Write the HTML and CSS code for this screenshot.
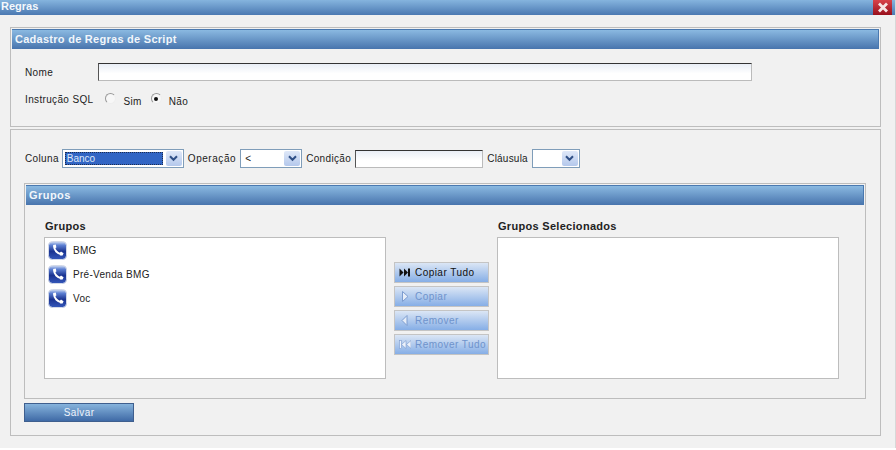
FILE: index.html
```html
<!DOCTYPE html>
<html lang="en">
<head>
  <meta charset="UTF-8">
  <title>Regras</title>
  <link rel="stylesheet" href="styles.css">
</head>
<body>
  <svg class="defs" width="0" height="0">
    <defs>
      <linearGradient id="phone-bg" x1="0" y1="0" x2="0" y2="1">
        <stop offset="0" stop-color="#d5e0f4"/>
        <stop offset="0.2" stop-color="#5f82d4"/>
        <stop offset="0.55" stop-color="#1a3391"/>
        <stop offset="1" stop-color="#3558bb"/>
      </linearGradient>
      <symbol id="phone" viewBox="0 0 19 19">
        <rect x="0.5" y="0.5" width="18" height="18" rx="4" fill="url(#phone-bg)" stroke="#d3d9e8"/>
        <path d="M6.2 5 C6 9 9.4 13 13.8 13.2" fill="none" stroke="#fff" stroke-width="2"/>
        <path d="M5 4 L7.8 3.6 L8.4 6.6 L6 7.4 Z M11.4 12.2 L13 10.6 L15.6 12.2 L14.6 14.6 L12 14.6 Z" fill="#fff"/>
      </symbol>
    </defs>
  </svg>

  <div class="window">
    <div class="titlebar">
      <span class="title">Regras</span>
      <span class="close">
        <svg width="12" height="11" viewBox="0 0 12 11"><path d="M2 1.5 L10 9.5 M10 1.5 L2 9.5" stroke="#f6e6e6" stroke-width="2.8"/></svg>
      </span>
    </div>

    <!-- Cadastro -->
    <section class="panel panel-top">
      <h3 class="header header-cadastro">Cadastro de Regras de Script</h3>
      <div class="row row-nome">
        <label class="lbl lbl-nome">Nome</label>
        <input type="text" class="field field-nome">
      </div>
      <div class="row row-sql">
        <label class="lbl">Instrução SQL</label>
        <span class="radio"></span><span class="lbl radio-lbl">Sim</span>
        <span class="radio checked"></span><span class="lbl radio-lbl">Não</span>
      </div>
    </section>

    <section class="panel panel-main">
      <!-- Filtro -->
      <div class="filter">
        <label class="lbl lbl-coluna">Coluna</label>
        <div class="combo combo-coluna">
          <span class="combo-value selected">Banco</span>
          <span class="combo-btn"><svg width="9" height="7" viewBox="0 0 9 7"><path d="M1 1.2 L4.5 4.8 L8 1.2" fill="none" stroke="#2f4f86" stroke-width="2"/></svg></span>
        </div>
        <label class="lbl lbl-op">Operação</label>
        <div class="combo combo-op">
          <span class="combo-value">&lt;</span>
          <span class="combo-btn"><svg width="9" height="7" viewBox="0 0 9 7"><path d="M1 1.2 L4.5 4.8 L8 1.2" fill="none" stroke="#2f4f86" stroke-width="2"/></svg></span>
        </div>
        <label class="lbl">Condição</label>
        <input type="text" class="field field-cond">
        <label class="lbl lbl-clausula">Cláusula</label>
        <div class="combo combo-clausula">
          <span class="combo-value"></span>
          <span class="combo-btn"><svg width="9" height="7" viewBox="0 0 9 7"><path d="M1 1.2 L4.5 4.8 L8 1.2" fill="none" stroke="#2f4f86" stroke-width="2"/></svg></span>
        </div>
      </div>

      <!-- Grupos -->
      <div class="panel panel-grupos">
        <h3 class="header">Grupos</h3>
        <div class="picker">
          <div class="col">
            <div class="col-title">Grupos</div>
            <ul class="list">
              <li><svg class="phone" width="19" height="19"><use href="#phone"/></svg>BMG</li>
              <li><svg class="phone" width="19" height="19"><use href="#phone"/></svg>Pré-Venda BMG</li>
              <li><svg class="phone" width="19" height="19"><use href="#phone"/></svg>Voc</li>
            </ul>
          </div>
          <div class="moves">
            <button class="move">
              <svg width="12" height="9" viewBox="0 0 12 9"><path d="M0.5 0.5 L4.5 4.5 L0.5 8.5 Z M5 0.5 L9 4.5 L5 8.5 Z" fill="#111"/><rect x="9" y="0.5" width="2" height="8" fill="#111"/></svg>
              Copiar Tudo
            </button>
            <button class="move" disabled>
              <svg width="12" height="11" viewBox="0 0 12 11"><path d="M3.5 0.5 L9 5.5 L3.5 10.5 Z" fill="#e6edf8" stroke="#7c9ccf"/></svg>
              Copiar
            </button>
            <button class="move" disabled>
              <svg width="12" height="11" viewBox="0 0 12 11"><path d="M8 0.5 L3 5.5 L8 10.5 Z" fill="#e6edf8" stroke="#7c9ccf"/></svg>
              Remover
            </button>
            <button class="move" disabled>
              <svg width="12" height="9" viewBox="0 0 12 9"><rect x="0.5" y="0.5" width="2" height="8" fill="#eef3fb" stroke="#7c9ccf" stroke-width="0.6"/><path d="M7 0.5 L2.5 4.5 L7 8.5 Z M12 0.5 L7.5 4.5 L12 8.5 Z" fill="#eef3fb" stroke="#7c9ccf" stroke-width="0.6"/></svg>
              Remover Tudo
            </button>
          </div>
          <div class="col">
            <div class="col-title">Grupos Selecionados</div>
            <ul class="list"></ul>
          </div>
        </div>
      </div>

      <button class="save">Salvar</button>
    </section>
  </div>
</body>
</html>
```

FILE: styles.css
```css
body {
  margin: 0;
  padding: 0;
  background-color: #fff;
  font-family: "Liberation Sans", Arial, sans-serif;
  font-size: 10px;
  color: #222;
  overflow: hidden;
}

.defs {
  position: absolute;
}

.window {
  width: 895px;
  height: 448px;
  background-color: #f1f1f1;
  border-right: 1px solid #d8d8d8;
  overflow: hidden;
}

/* Title bar */
.titlebar {
  height: 15px;
  padding-left: 1px;
  display: flex;
  justify-content: space-between;
  background: linear-gradient(#85b4de, #4b79b2);
  color: #f4f8fc;
  font-size: 11px;
  font-weight: bold;
  line-height: 13px;
}

.close {
  width: 19px;
  height: 15px;
  margin-right: 3px;
  display: flex;
  align-items: center;
  justify-content: center;
  background: linear-gradient(#d8424a, #98101c);
}

/* Panels */
.panel {
  border: 1px solid #bdbdbd;
  padding: 1px;
}

.panel-top {
  width: 867px;
  height: 96px;
  margin: 12px 0 0 10px;
}

.panel-main {
  width: 867px;
  height: 303px;
  margin: 2px 0 0 10px;
}

.panel-grupos {
  width: 838px;
  height: 212px;
  margin: 15px 0 0 12px;
}

.header {
  margin: 0;
  height: 20px;
  padding-left: 3px;
  border: 1px solid #4a79b0;
  border-width: 1px 1px 0 0;
  box-sizing: border-box;
  background: linear-gradient(#8ab9e1, #4874ad);
  color: #f1f6fb;
  font-size: 11px;
  font-weight: bold;
  letter-spacing: 0.45px;
  line-height: 19px;
}

.header-cadastro {
  letter-spacing: 0.27px;
}

.lbl {
  letter-spacing: 0.35px;
}

/* Form rows */
.row {
  display: flex;
  align-items: center;
  padding-left: 13px;
}

.row-nome {
  margin-top: 14px;
}

.lbl-nome {
  width: 73px;
}

.field {
  box-sizing: border-box;
  height: 18px;
  margin: 0;
  padding: 0;
  border: 1px solid #bbb;
  border-top-color: #333;
  border-left-color: #555;
  background: linear-gradient(#e9eef6, #fff 60%);
}

.field-nome {
  width: 654px;
}

.field-cond {
  width: 128px;
}

.row-sql {
  margin-top: 11px;
}

.radio {
  width: 11px;
  height: 11px;
  margin: -2px 0 0 12px;
  box-sizing: border-box;
  border: 1px solid #999;
  border-right-color: #eee;
  border-bottom-color: #eee;
  border-radius: 50%;
  background-color: #f7f7f7;
  display: flex;
  align-items: center;
  justify-content: center;
}

.checked::after {
  content: "";
  width: 4px;
  height: 4px;
  border-radius: 50%;
  background-color: #111;
}

.radio-lbl {
  margin: 4px 0 0 7px;
}

.radio-lbl + .radio {
  margin-left: 9px;
}

/* Filter */
.filter {
  display: flex;
  align-items: center;
  gap: 4px;
  margin-top: 18px;
  padding-left: 13px;
  height: 19px;
}

.filter .lbl-op {
  letter-spacing: 0.55px;
}

.filter .lbl-coluna {
  margin-right: -1px;
}

.filter .lbl-clausula {
  letter-spacing: 0.22px;
}

.combo {
  box-sizing: border-box;
  height: 19px;
  display: flex;
  align-items: center;
  justify-content: space-between;
  padding: 2px 1px 2px 2px;
  border: 1px solid #7f9db9;
  background-color: #fff;
}

.combo-coluna {
  width: 122px;
}

.combo-op {
  width: 62px;
}

.combo-clausula {
  width: 48px;
}

.combo-value {
  flex: 1;
  align-self: stretch;
  line-height: 13px;
  padding-left: 2px;
}

.selected {
  background-color: #3165c4;
  color: #dfe8f8;
  outline: 1px dotted #1b2c50;
  outline-offset: -1px;
  margin-right: 3px;
}

.combo-btn {
  width: 16px;
  height: 15px;
  display: flex;
  align-items: center;
  justify-content: center;
  background: linear-gradient(#dfe8f8, #b4c8ec);
  border-radius: 2px;
}

/* Picker */
.picker {
  display: flex;
  align-items: flex-start;
  margin-top: 15px;
  padding-left: 18px;
}

.col-title {
  height: 17px;
  padding-left: 1px;
  font-size: 11px;
  font-weight: bold;
  letter-spacing: 0.3px;
  line-height: 13px;
}

.list {
  box-sizing: border-box;
  width: 342px;
  height: 142px;
  margin: 0;
  padding: 0 3px;
  list-style: none;
  border: 1px solid #bdbdbd;
  background-color: #fff;
}

.list li {
  height: 24px;
  display: flex;
  align-items: center;
  gap: 6px;
  letter-spacing: 0.3px;
}

.moves {
  display: flex;
  flex-direction: column;
  gap: 3px;
  width: 95px;
  margin: 42px 8px 0 8px;
}

.move {
  height: 21px;
  padding: 0 0 0 4px;
  display: flex;
  align-items: center;
  gap: 4px;
  border: 1px solid #c4c4c4;
  background: linear-gradient(#dbe6f5, #86aee6);
  color: #111;
  font-family: inherit;
  font-size: 10px;
  letter-spacing: 0.45px;
  white-space: nowrap;
}

.move:disabled {
  color: #6f93cc;
}

.save {
  display: block;
  width: 110px;
  height: 19px;
  margin: 4px 0 0 12px;
  padding: 0;
  border: 1px solid #3f5f8e;
  background: linear-gradient(#86b3dc, #3f6aa6);
  color: #eef4fb;
  font-family: inherit;
  font-size: 10px;
  letter-spacing: 0.4px;
}
```
